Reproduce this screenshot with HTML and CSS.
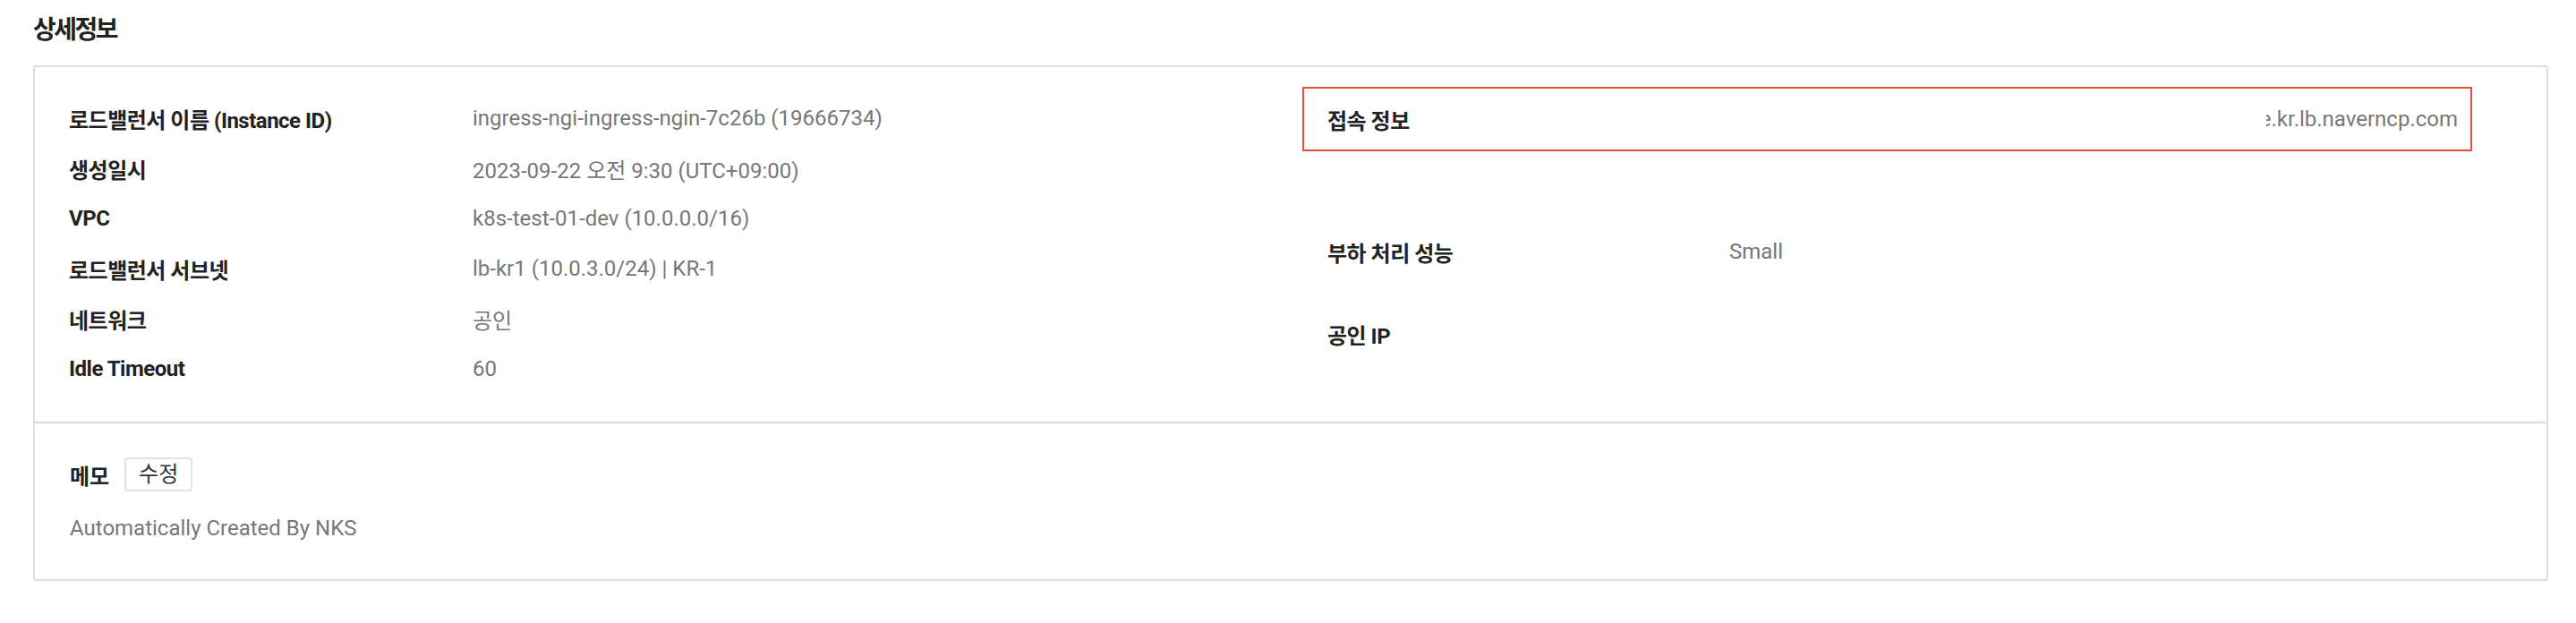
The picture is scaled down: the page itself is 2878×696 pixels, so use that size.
FILE: index.html
```html
<!DOCTYPE html>
<html lang="ko">
<head>
<meta charset="utf-8">
<title>상세정보</title>
<link rel="stylesheet" href="styles.css">
</head>
<body>
<div class="page">
  <h2 class="title">상세정보</h2>
  <div class="card">
    <div class="info-grid">
      <div class="col col-left">
        <div class="row"><span class="label">로드밸런서 이름 (Instance ID)</span><span class="value">ingress-ngi-ingress-ngin-7c26b (19666734)</span></div>
        <div class="row"><span class="label">생성일시</span><span class="value">2023-09-22 오전 9:30 (UTC+09:00)</span></div>
        <div class="row"><span class="label">VPC</span><span class="value">k8s-test-01-dev (10.0.0.0/16)</span></div>
        <div class="row"><span class="label">로드밸런서 서브넷</span><span class="value">lb-kr1 (10.0.3.0/24) | KR-1</span></div>
        <div class="row"><span class="label">네트워크</span><span class="value">공인</span></div>
        <div class="row"><span class="label">Idle Timeout</span><span class="value">60</span></div>
      </div>
      <div class="col col-right">
        <div class="row row-highlight"><span class="label">접속 정보</span><span class="clip"><span class="clip-text">e.kr.lb.naverncp.com</span></span></div>
        <div class="row row-perf"><span class="label">부하 처리 성능</span><span class="value">Small</span></div>
        <div class="row row-ip"><span class="label">공인 IP</span><span class="value"></span></div>
      </div>
    </div>
    <div class="memo">
      <div class="memo-head"><span class="label-inline">메모</span><button class="btn" type="button">수정</button></div>
      <p class="memo-text">Automatically Created By NKS</p>
    </div>
  </div>
</div>
</body>
</html>
```
FILE: styles.css
```css
* { box-sizing: border-box; }
body {
  margin: 0;
  background: #fff;
  font-family: Roboto, "Noto Sans CJK KR", sans-serif;
  color: #222;
}
.page {
  padding: 0 31px 0 37px;
}
.title {
  margin: 0;
  height: 73px;
  padding-top: 14px;
  font-size: 28px;
  line-height: 40px;
  font-weight: 700;
  letter-spacing: -2.5px;
  color: #222;
}
.card {
  border: 2px solid #dedede;
  border-radius: 3px;
  height: 576px;
}
.info-grid {
  display: grid;
  grid-template-columns: 1416px 1fr;
  border-bottom: 2px solid #dedede;
  height: 398px;
}
.col-left {
  padding: 29px 0 0 38px;
}
.col-right {
  padding: 22px 83px 0 0;
}
.row {
  display: flex;
  align-items: center;
  height: 56px;
  font-size: 24px;
}
.label {
  flex: 0 0 451px;
  font-weight: 700;
  color: #222;
  letter-spacing: -0.5px;
}
.col-right .label { flex-basis: 449px; }
.value {
  color: #777;
}
.row-highlight {
  height: 72px;
  border: 2px solid #e2503a;
  padding: 0 14px 0 26px;
}
.clip {
  margin-left: auto;
  width: 214px;
  overflow: hidden;
  display: flex;
  justify-content: flex-end;
  white-space: nowrap;
  color: #777;
}
.clip-text { flex: none; }
.row-perf { margin-top: 84px; padding-left: 28px; }
.row-ip { margin-top: 36px; padding-left: 28px; }
.memo {
  padding: 38px 0 0 39px;
}
.memo-head {
  display: flex;
  align-items: center;
  gap: 17px;
}
.label-inline {
  font-size: 24px;
  font-weight: 700;
  color: #222;
}
.btn {
  width: 76px;
  height: 38px;
  border: 2px solid #e2e2e2;
  border-radius: 4px;
  background: #fff;
  font-family: inherit;
  font-size: 24px;
  color: #333;
  padding: 0;
  line-height: 32px;
  cursor: pointer;
}
.memo-text {
  margin: 25px 0 0;
  font-size: 24px;
  line-height: 32px;
  color: #777;
}
```
